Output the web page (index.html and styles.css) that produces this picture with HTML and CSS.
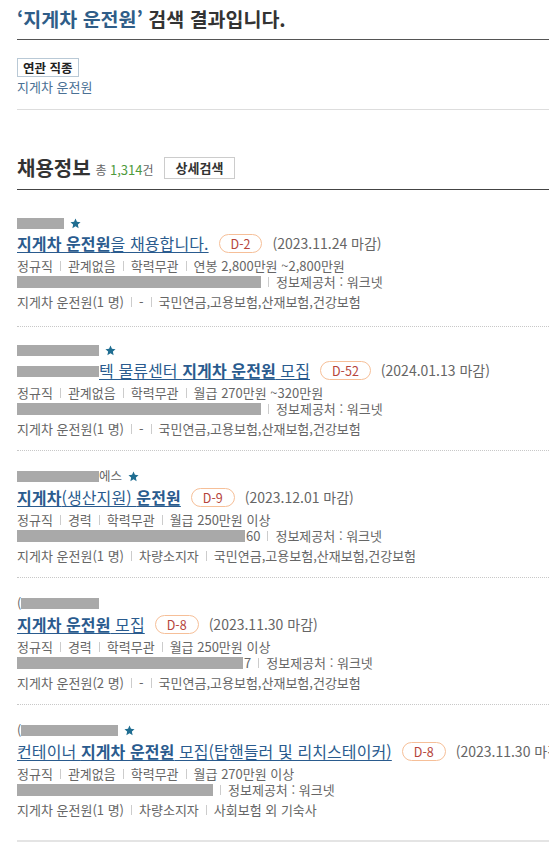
FILE: index.html
```html
<!DOCTYPE html>
<html lang="ko">
<head>
<meta charset="utf-8">
<title>검색 결과</title>
<link rel="stylesheet" href="styles.css">
</head>
<body>
<div class="page">
  <h1 class="search-title"><span class="kw">‘지게차 운전원’</span> 검색 결과입니다.</h1>

  <section class="related">
    <span class="tag">연관 직종</span>
    <a class="related-link" href="#">지게차 운전원</a>
  </section>

  <section class="jobs">
    <div class="jobs-head">
      <h2>채용정보</h2>
      <span class="count">총 <em>1,314</em>건</span>
      <button class="detail" type="button">상세검색</button>
    </div>

    <ul class="list">
      <li class="card">
        <div class="company"><span class="redact w47"></span><svg class="star" viewBox="0 0 12 12"><path d="M6 .6l1.6 3.6 3.9.4-2.9 2.6.8 3.9L6 9.1 2.6 11.1l.8-3.9L.5 4.6l3.9-.4z"/></svg></div>
        <div class="title"><a href="#"><b>지게차 운전원</b>을 채용합니다.</a><span class="dday">D-2</span><span class="due">(2023.11.24 마감)</span></div>
        <div class="row">정규직<i class="sep"></i>관계없음<i class="sep"></i>학력무관<i class="sep"></i>연봉 2,800만원 ~2,800만원</div>
        <div class="row"><span class="redact w244"></span><i class="sep"></i>정보제공처 : 워크넷</div>
        <div class="row">지게차 운전원(1 명)<i class="sep"></i>-<i class="sep"></i>국민연금,고용보험,산재보험,건강보험</div>
      </li>

      <li class="card">
        <div class="company"><span class="redact w82"></span><svg class="star" viewBox="0 0 12 12"><path d="M6 .6l1.6 3.6 3.9.4-2.9 2.6.8 3.9L6 9.1 2.6 11.1l.8-3.9L.5 4.6l3.9-.4z"/></svg></div>
        <div class="title"><a href="#"><span class="redact w82"></span>텍 물류센터 <b>지게차 운전원</b> 모집</a><span class="dday">D-52</span><span class="due">(2024.01.13 마감)</span></div>
        <div class="row">정규직<i class="sep"></i>관계없음<i class="sep"></i>학력무관<i class="sep"></i>월급 270만원 ~320만원</div>
        <div class="row"><span class="redact w244"></span><i class="sep"></i>정보제공처 : 워크넷</div>
        <div class="row">지게차 운전원(1 명)<i class="sep"></i>-<i class="sep"></i>국민연금,고용보험,산재보험,건강보험</div>
      </li>

      <li class="card">
        <div class="company"><span class="redact w82"></span>에스<svg class="star" viewBox="0 0 12 12"><path d="M6 .6l1.6 3.6 3.9.4-2.9 2.6.8 3.9L6 9.1 2.6 11.1l.8-3.9L.5 4.6l3.9-.4z"/></svg></div>
        <div class="title"><a href="#"><b>지게차</b>(생산지원) <b>운전원</b></a><span class="dday">D-9</span><span class="due">(2023.12.01 마감)</span></div>
        <div class="row">정규직<i class="sep"></i>경력<i class="sep"></i>학력무관<i class="sep"></i>월급 250만원 이상</div>
        <div class="row"><span class="redact w228"></span><span class="tail">60</span><i class="sep"></i>정보제공처 : 워크넷</div>
        <div class="row">지게차 운전원(1 명)<i class="sep"></i>차량소지자<i class="sep"></i>국민연금,고용보험,산재보험,건강보험</div>
      </li>

      <li class="card">
        <div class="company">(<span class="redact w78"></span></div>
        <div class="title"><a href="#"><b>지게차 운전원</b> 모집</a><span class="dday">D-8</span><span class="due">(2023.11.30 마감)</span></div>
        <div class="row">정규직<i class="sep"></i>경력<i class="sep"></i>학력무관<i class="sep"></i>월급 250만원 이상</div>
        <div class="row"><span class="redact w226"></span><span class="tail">7</span><i class="sep"></i>정보제공처 : 워크넷</div>
        <div class="row">지게차 운전원(2 명)<i class="sep"></i>-<i class="sep"></i>국민연금,고용보험,산재보험,건강보험</div>
      </li>

      <li class="card">
        <div class="company">(<span class="redact w97"></span><svg class="star" viewBox="0 0 12 12"><path d="M6 .6l1.6 3.6 3.9.4-2.9 2.6.8 3.9L6 9.1 2.6 11.1l.8-3.9L.5 4.6l3.9-.4z"/></svg></div>
        <div class="title"><a href="#">컨테이너 <b>지게차 운전원</b> 모집(탑핸들러 및 리치스테이커)</a><span class="dday">D-8</span><span class="due">(2023.11.30 마감)</span></div>
        <div class="row">정규직<i class="sep"></i>관계없음<i class="sep"></i>학력무관<i class="sep"></i>월급 270만원 이상</div>
        <div class="row"><span class="redact w196"></span><i class="sep"></i>정보제공처 : 워크넷</div>
        <div class="row">지게차 운전원(1 명)<i class="sep"></i>차량소지자<i class="sep"></i>사회보험 외 기숙사</div>
      </li>
    </ul>
  </section>
</div>
</body>
</html>
```

FILE: styles.css
```css
html { overflow: hidden; }
body {
  margin: 0;
  background: #fff;
  font-family: "Noto Sans CJK KR", "Noto Sans", sans-serif;
  color: #333;
}
.page {
  width: 640px;
  padding-left: 17px;
}
a { text-decoration: none; }

.search-title {
  margin: 0;
  padding: 6px 0 8px;
  font-size: 19.5px;
  line-height: 25px;
  font-weight: bold;
  color: #333;
  border-bottom: 1px solid #555;
  white-space: nowrap;
}
.search-title .kw { color: #2f5d88; }

.related {
  display: flex;
  flex-direction: column;
  align-items: flex-start;
  padding-top: 18px;
  padding-bottom: 14px;
  border-bottom: 1px solid #ddd;
}
.tag {
  display: inline-block;
  padding: 0 5px;
  border: 1px solid #b9c9d6;
  font-size: 12.5px;
  line-height: 17px;
  font-weight: bold;
  color: #222;
}
.related-link {
  margin-top: 2px;
  font-size: 13px;
  line-height: 16px;
  color: #4a7094;
}

.jobs-head {
  display: flex;
  align-items: center;
  padding-top: 47px;
  padding-bottom: 10px;
  border-bottom: 1px solid #444;
  height: 22px;
}
.jobs-head h2 {
  margin: 0;
  font-size: 20px;
  line-height: 22px;
  font-weight: bold;
  color: #333;
}
.count {
  margin-left: 5px;
  font-size: 12px;
  color: #666;
  line-height: 22px;
  padding-top: 3px;
}
.count em {
  font-style: normal;
  font-size: 13px;
  color: #4e9a3c;
}
.detail {
  margin-left: 10px;
  height: 22px;
  padding: 0 11px;
  border: 1px solid #ccc;
  background: #fff;
  font-family: inherit;
  font-size: 13px;
  font-weight: bold;
  color: #333;
  line-height: 20px;
}

.list {
  list-style: none;
  margin: 10px 0 0;
  padding: 0;
}
.card {
  padding: 18px 0 13px;
  border-top: 1px dotted #c8c8c8;
  white-space: nowrap;
}
.card:first-child { border-top: none; padding-bottom: 16px; }
.card:last-child {
  padding-bottom: 22px;
  border-bottom: 2px solid #e4e4e4;
}

.company {
  display: flex;
  align-items: center;
  font-size: 12.5px;
  line-height: 14px;
  color: #666;
}
.star {
  width: 11px;
  height: 11px;
  margin-left: 6px;
  fill: #1f6d91;
}
.redact {
  display: inline-block;
  height: 11px;
  background: #a9a9a9;
  vertical-align: middle;
}
.w47 { width: 47px; }
.w78 { width: 78px; }
.w82 { width: 82px; }
.w97 { width: 97px; }
.w196 { width: 196px; }
.w226 { width: 226px; }
.w228 { width: 228px; }
.w244 { width: 244px; }
.tail { margin-left: 1px; }

.title {
  display: flex;
  align-items: center;
  margin-top: 3px;
  height: 22px;
}
.title a {
  font-size: 16px;
  letter-spacing: 0.1px;
  line-height: 22px;
  color: #2a5b8e;
  text-decoration: underline;
  text-underline-offset: 2px;
}
.title a b { font-weight: bold; }
.title a .redact { margin-top: -3px; }
.dday {
  margin-left: 10px;
  padding: 0 11px;
  height: 17px;
  border: 1px solid #f6bf98;
  border-radius: 10px;
  font-size: 12.5px;
  line-height: 17px;
  color: #b5443a;
}
.due {
  margin-left: 10px;
  font-size: 14px;
  color: #666;
}

.row {
  display: flex;
  align-items: center;
  font-size: 13px;
  line-height: 16px;
  color: #666;
}
.title + .row { margin-top: 4px; }
.row + .row + .row { margin-top: 4px; }
.sep {
  display: inline-block;
  width: 1px;
  height: 10px;
  margin: 0 7px;
  background: #ccc;
}
.row .redact { height: 12px; }
```
